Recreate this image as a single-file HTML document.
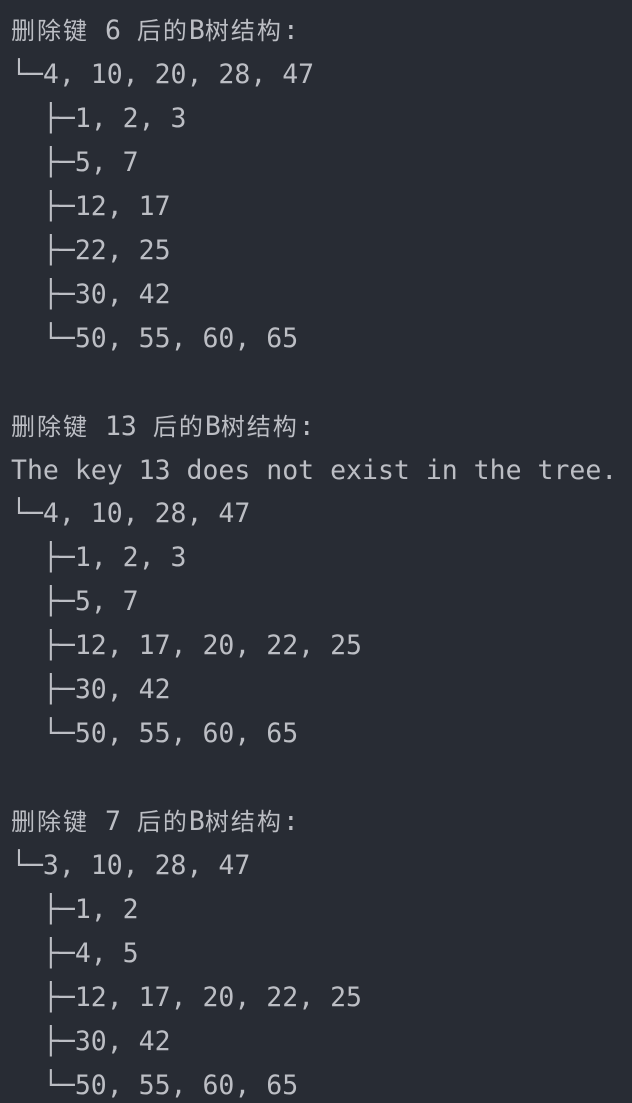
<!DOCTYPE html>
<html><head><meta charset="utf-8"><style>
html,body{margin:0;padding:0;background:#282c34;width:632px;height:1103px;overflow:hidden}
pre{margin:0;padding:9px 0 0 11px;font-family:"DejaVu Sans Mono","Liberation Mono",monospace;font-size:26.5px;line-height:43.95px;color:#bcbec4}
.c{font-family:"Noto Sans CJK SC",sans-serif;font-size:24px;letter-spacing:2px;line-height:0}
</style></head><body><pre><span class="c">删除键</span> 6 <span class="c">后的</span>B<span class="c">树结构</span>:
└─4, 10, 20, 28, 47
  ├─1, 2, 3
  ├─5, 7
  ├─12, 17
  ├─22, 25
  ├─30, 42
  └─50, 55, 60, 65

<span class="c">删除键</span> 13 <span class="c">后的</span>B<span class="c">树结构</span>:
The key 13 does not exist in the tree.
└─4, 10, 28, 47
  ├─1, 2, 3
  ├─5, 7
  ├─12, 17, 20, 22, 25
  ├─30, 42
  └─50, 55, 60, 65

<span class="c">删除键</span> 7 <span class="c">后的</span>B<span class="c">树结构</span>:
└─3, 10, 28, 47
  ├─1, 2
  ├─4, 5
  ├─12, 17, 20, 22, 25
  ├─30, 42
  └─50, 55, 60, 65</pre></body></html>
